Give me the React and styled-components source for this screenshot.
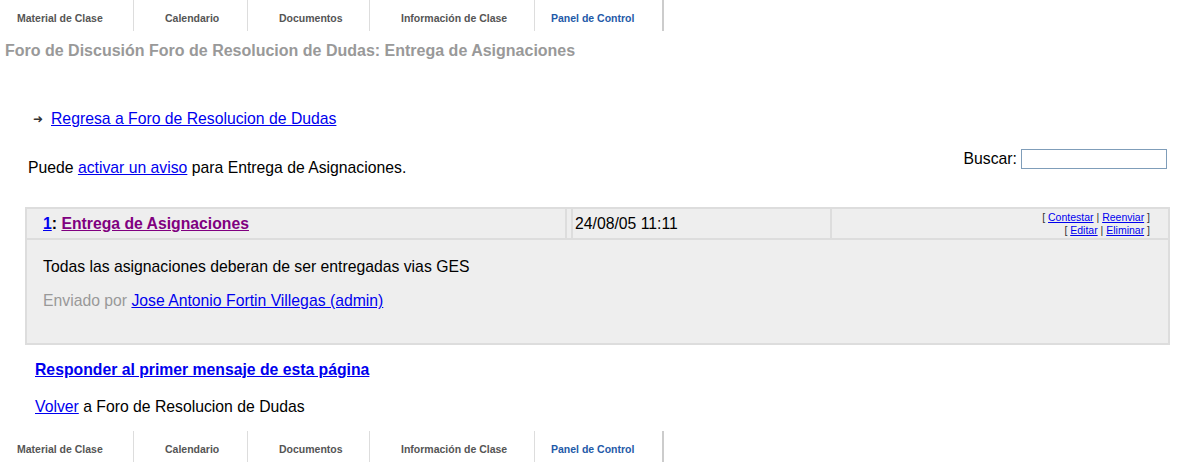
import React from 'react'
import styled, { createGlobalStyle } from 'styled-components'

const GlobalStyle = createGlobalStyle`
  body {
    margin: 0;
    background: #fff;
    font-family: "Liberation Sans", Arial, sans-serif;
    color: #000;
  }
`

const Page = styled.div`
  width: 1180px;
`

const TabBar = styled.div`
  display: flex;
  height: 31px;
`

const Tab = styled.a`
  display: flex;
  align-items: center;
  box-sizing: border-box;
  width: ${props => props.$w}px;
  padding: 5px 0 0 ${props => props.$left || 31}px;
  border-right: ${props => (props.$last ? '2px solid #ccc' : '1px solid #ddd')};
  font-size: 10.5px;
  font-weight: bold;
  color: ${props => (props.$active ? '#1f5aa8' : '#555')};
  text-decoration: none;
  white-space: nowrap;
  overflow: hidden;
`

const Title = styled.h1`
  margin: 0;
  padding: 11px 0 0 5px;
  height: 26px;
  font-size: 16px;
  font-weight: bold;
  color: #999;
`

const Content = styled.div`
  padding: 0 10px 0 25px;
  font-size: 15.75px;
`

const BackRow = styled.div`
  display: flex;
  align-items: center;
  gap: 8px;
  margin: 41px 0 0 8px;
  height: 20px;
`

const Arrow = styled.span`
  font-size: 12px;
  color: #333;
`

const Link = styled.a`
  color: ${props => (props.$visited ? '#800080' : '#0000ee')};
  text-decoration: underline;
  font-weight: ${props => (props.$bold ? 'bold' : 'inherit')};
  cursor: pointer;
`

const NoticeRow = styled.div`
  display: flex;
  justify-content: space-between;
  align-items: flex-end;
  margin-top: 20px;
`

const Notice = styled.span`
  padding-left: 3px;
  line-height: 20px;
  margin-bottom: -2px;
`

const Search = styled.label`
  display: flex;
  align-items: center;
  gap: 4px;
  margin-bottom: 7px;
  margin-right: 3px;
`

const SearchInput = styled.input`
  width: 140px;
  height: 18px;
  border: 1px solid #7f9db9;
  padding: 0 2px;
  margin: 0;
`

const PostTable = styled.table`
  width: 1145px;
  margin-top: 31px;
  border-collapse: separate;
  border-spacing: 2px;
  background: #ddd;
`

const HeadCell = styled.td`
  background: #eee;
  height: 29px;
  padding: 0 0 0 ${props => props.$pl || 0}px;
  width: ${props => props.$w || 'auto'};
  vertical-align: middle;
`

const TitleCell = styled(HeadCell)`
  font-weight: bold;
`

const ActionCell = styled(HeadCell)`
  text-align: right;
  font-size: 10.5px;
  line-height: 13px;
  color: #333;
  padding-right: 18px;
`

const BodyCell = styled.td`
  background: #eee;
  height: 103px;
  padding: 0 16px;
  vertical-align: top;
`

const BodyText = styled.p`
  margin: 18px 0 0 0;
`

const Sender = styled.p`
  margin: 16px 0 0 0;
  color: #999;
`

const Footer = styled.div`
  padding-left: 35px;
  font-size: 15.75px;
`

const Reply = styled.div`
  margin-top: 16px;
  height: 20px;
`

const Back = styled.div`
  margin-top: 17px;
  height: 20px;
`

const BottomBar = styled(TabBar)`
  margin-top: 13px;
`

const tabs = [
  { label: 'Material de Clase', left: 17, w: 134 },
  { label: 'Calendario', w: 114 },
  { label: 'Documentos', w: 122 },
  { label: 'Información de Clase', w: 165 },
  { label: 'Panel de Control', left: 16, w: 129, active: true, last: true },
]

function Tabs({ as }) {
  const Bar = as || TabBar
  return (
    <Bar>
      {tabs.map(t => (
        <Tab key={t.label} $left={t.left} $w={t.w} $active={t.active} $last={t.last}>
          {t.label}
        </Tab>
      ))}
    </Bar>
  )
}

export default function App() {
  return (
    <Page>
      <GlobalStyle />
      <Tabs />
      <Title>Foro de Discusión Foro de Resolucion de Dudas: Entrega de Asignaciones</Title>
      <Content>
        <BackRow>
          <Arrow>➜</Arrow>
          <Link>Regresa a Foro de Resolucion de Dudas</Link>
        </BackRow>
        <NoticeRow>
          <Notice>
            Puede <Link>activar un aviso</Link> para Entrega de Asignaciones.
          </Notice>
          <Search>
            Buscar:
            <SearchInput type="text" />
          </Search>
        </NoticeRow>
        <PostTable>
          <tbody>
            <tr>
              <TitleCell $pl={16} $w="522px">
                <Link>1</Link>: <Link $visited>Entrega de Asignaciones</Link>
              </TitleCell>
              <HeadCell $w="4px" />
              <HeadCell $pl={2} $w="255px">24/08/05 11:11</HeadCell>
              <ActionCell>
                [ <Link>Contestar</Link> | <Link>Reenviar</Link> ]
                <br />
                [ <Link>Editar</Link> | <Link>Eliminar</Link> ]
              </ActionCell>
            </tr>
            <tr>
              <BodyCell colSpan={4}>
                <BodyText>Todas las asignaciones deberan de ser entregadas vias GES</BodyText>
                <Sender>
                  Enviado por <Link>Jose Antonio Fortin Villegas (admin)</Link>
                </Sender>
              </BodyCell>
            </tr>
          </tbody>
        </PostTable>
      </Content>
      <Footer>
        <Reply>
          <Link $bold>Responder al primer mensaje de esta página</Link>
        </Reply>
        <Back>
          <Link>Volver</Link> a Foro de Resolucion de Dudas
        </Back>
      </Footer>
      <Tabs as={BottomBar} />
    </Page>
  )
}
